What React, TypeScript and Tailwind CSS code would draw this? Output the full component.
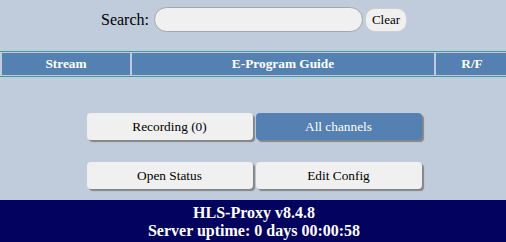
import React from "react";

const serif = { fontFamily: '"Liberation Serif", "Times New Roman", serif' };

export default function App() {
  const btn =
    "w-[166px] h-[27px] rounded-[4px] text-[13.33px] leading-none flex items-center justify-center shadow-[2px_2px_1px_#858585]";
  return (
    <div className="w-full h-[242px] overflow-hidden bg-[#c0ccdb]" style={serif}>
      <div className="w-[508px] h-[242px] flex flex-col">
        <div className="pt-[7px] flex justify-center items-center">
          <span className="text-[16px] leading-none text-black mr-[5px]">Search:</span>
          <div className="w-[209px] h-[25px] rounded-full bg-[#f0f0f0] border border-[#a6a6a6]" />
          <div className="ml-[2px] w-[42px] h-[24px] rounded-[10px] bg-[#f0f0f0] border border-[#cfcfcf] flex items-center justify-center text-[13px] leading-none text-black">
            Clear
          </div>
        </div>
        <div className="mt-[19px] border-t border-b border-[#3f9a9c] py-[1px] pl-[2px] flex gap-[2px] text-white font-bold text-[13.33px] leading-none">
          <div className="w-[128px] h-[22px] bg-[#5580b2] flex items-center justify-center">Stream</div>
          <div className="w-[302px] h-[22px] bg-[#5580b2] flex items-center justify-center">E-Program Guide</div>
          <div className="w-[72px] h-[22px] bg-[#5580b2] flex items-center justify-center">R/F</div>
        </div>
        <div className="mt-[36px] flex justify-center gap-[3px]">
          <div className={btn + " bg-[#f0f0f0] text-black"}>Recording (0)</div>
          <div className={btn + " bg-[#5580b2] text-white"}>All channels</div>
        </div>
        <div className="mt-[22px] flex justify-center gap-[3px]">
          <div className={btn + " bg-[#f0f0f0] text-black"}>Open Status</div>
          <div className={btn + " bg-[#f0f0f0] text-black"}>Edit Config</div>
        </div>
        <div className="mt-[11px] flex-1 bg-[#03035f] text-white font-bold text-[16px] leading-[18px] text-center pt-[4px]">
          <div>HLS-Proxy v8.4.8</div>
          <div>Server uptime: 0 days 00:00:58</div>
        </div>
      </div>
    </div>
  );
}
